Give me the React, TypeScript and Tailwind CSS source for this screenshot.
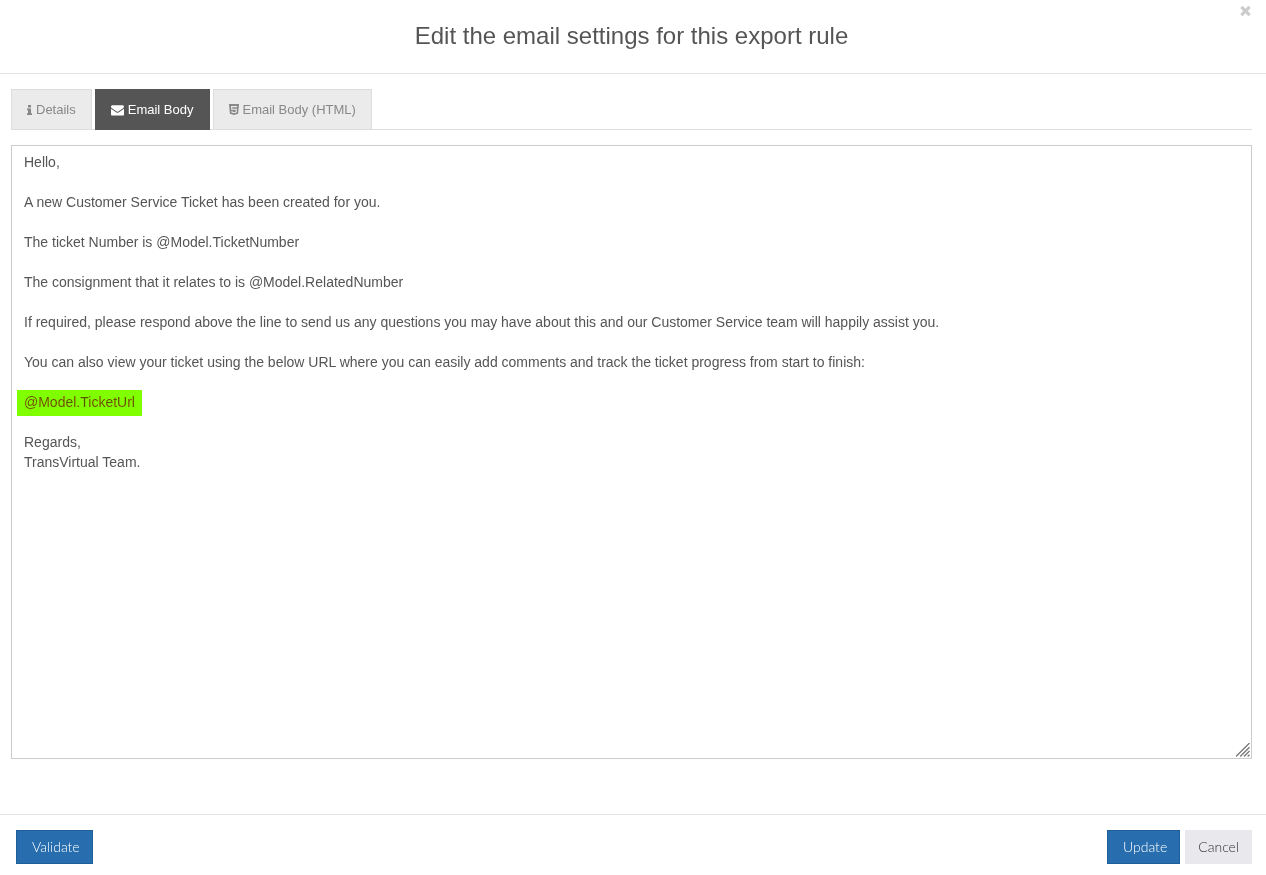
import { useState } from 'react';
import type { ReactNode } from 'react';
import { twMerge } from 'tailwind-merge';

const EMAIL_BODY = `Hello,

A new Customer Service Ticket has been created for you.

The ticket Number is @Model.TicketNumber

The consignment that it relates to is @Model.RelatedNumber

If required, please respond above the line to send us any questions you may have about this and our Customer Service team will happily assist you.

You can also view your ticket using the below URL where you can easily add comments and track the ticket progress from start to finish:

@Model.TicketUrl

Regards,
TransVirtual Team.`;

interface TabProps {
    active?: boolean;
    icon: ReactNode;
    label: string;
}

const InfoIcon = () => (
    <svg viewBox="0 0 5 10" className="h-[10px] w-[5px]" fill="currentColor" aria-hidden="true">
        <path d="M1 0h3v2.4H1zM0 3.4h4v4.8h1V10H0V8.2h1V5.2H0z" />
    </svg>
);

const EnvelopeIcon = () => (
    <svg viewBox="0 0 1792 1792" className="h-[14px] w-[13px]" fill="currentColor" aria-hidden="true">
        <path d="M1792 710v794q0 66-47 113t-113 47h-1472q-66 0-113-47t-47-113v-794q44 49 101 87 362 246 497 345 57 42 92.5 65.5t94.5 48 110 24.5h2q51 0 110-24.5t94.5-48 92.5-65.5q170-123 498-345 57-39 100-87zm0-294q0 79-49 151t-122 123q-376 261-468 325-10 7-42.5 31t-54 38.5-52 32.5-57.5 27-50 9h-2q-23 0-50-9t-57.5-27-52-32.5-54-38.5-42.5-31q-91-64-262-182.5t-205-142.5q-62-42-117-115.5t-55-136.5q0-78 41.5-130t118.5-52h1472q65 0 112.5 47t47.5 113z" />
    </svg>
);

const Html5Icon = () => (
    <svg viewBox="0 0 10 11" className="h-[11px] w-[10px]" aria-hidden="true">
        <path d="M0 0h10L9.1 9.7 5 11 .9 9.7z" fill="currentColor" />
        <path d="M8 2.6H2.6l.2 2.6h4.6l-.3 2.9L5 8.7l-2-.6-.1-1.2" fill="none" stroke="#ebebeb" strokeWidth="1.1" />
    </svg>
);

const CloseIcon = () => (
    <svg viewBox="0 0 1792 1792" className="size-[15px]" fill="currentColor" aria-hidden="true">
        <path d="M1490 1322q0 40-28 68l-136 136q-28 28-68 28t-68-28l-294-294-294 294q-28 28-68 28t-68-28l-136-136q-28-28-28-68t28-68l294-294-294-294q-28-28-28-68t28-68l136-136q28-28 68-28t68 28l294 294 294-294q28-28 68-28t68 28l136 136q28 28 28 68t-28 68l-294 294 294 294q28 28 28 68z" />
    </svg>
);

const Tab = ({ active, icon, label }: TabProps) => (
    <a
        href="#"
        role="tab"
        aria-selected={!!active}
        className={twMerge(
            'flex h-[41px] items-center gap-1 border border-[#ddd] bg-[#ebebeb] px-[15px] text-[13px] text-[#888]',
            active && 'border-[#555] bg-[#555] text-white'
        )}
    >
        {icon}
        <span>{label}</span>
    </a>
);

export default function App() {
    const [body, setBody] = useState(EMAIL_BODY);

    return (
        <div className="flex min-h-screen flex-col bg-white font-['Liberation_Sans',Arial,sans-serif] text-[#555]">
            <header className="relative border-b border-[#e5e5e5] pt-5 pr-[14px] pb-[21px] pl-[11px]">
                <h1 className="text-center text-2xl">Edit the email settings for this export rule</h1>
                <button type="button" aria-label="Close" className="absolute top-[3px] right-[13px] text-[#ccc]">
                    <CloseIcon />
                </button>
            </header>

            <main className="flex flex-1 flex-col pt-[15px] pr-[14px] pb-[55px] pl-[11px]">
                <div className="border-b border-[#ddd]">
                    <div role="tablist" className="-mb-px flex gap-[3px]">
                        <Tab icon={<InfoIcon />} label="Details" />
                        <Tab active icon={<EnvelopeIcon />} label="Email Body" />
                        <Tab icon={<Html5Icon />} label="Email Body (HTML)" />
                    </div>
                </div>

                <div className="relative mt-[15px] flex flex-1">
                    <textarea
                        aria-label="Email Body"
                        value={body}
                        onChange={(e) => setBody(e.target.value)}
                        spellCheck={false}
                        className="w-full flex-1 resize-none border border-[#ccc] bg-white px-3 py-[6px] text-sm leading-5 outline-none"
                    />
                    {/* Highlight over the ticket URL placeholder */}
                    <div className="pointer-events-none absolute top-[245px] left-[6px] h-[26px] w-[125px] bg-[#80ff00] mix-blend-darken" />
                    <svg
                        viewBox="0 0 15 15"
                        className="pointer-events-none absolute right-[2px] bottom-[2px] size-[14px]"
                        fill="none"
                        stroke="#777"
                        strokeWidth="1.4"
                        aria-hidden="true"
                    >
                        <path d="M0 14.5 14.5 0M4.5 14.5 14.5 4.5M8.5 14.5 14.5 8.5M12.5 14.5 14.5 12.5" />
                    </svg>
                </div>
            </main>

            <footer className="flex items-center justify-between border-t border-[#e5e5e5] pt-[15px] pr-[14px] pb-[11px] pl-4 font-['Lato',sans-serif] text-sm">
                <button type="button" className="h-[34px] border border-[#1f5f99] bg-[#286eae] pr-3 pl-[15px] font-light text-white">
                    Validate
                </button>
                <div className="flex gap-[5px]">
                    <button type="button" className="h-[34px] border border-[#1f5f99] bg-[#286eae] pr-3 pl-[15px] font-light text-white">
                        Update
                    </button>
                    <button type="button" className="h-[34px] border border-[#e8e8ed] bg-[#e8e8ed] px-3 font-light text-[#333]">
                        Cancel
                    </button>
                </div>
            </footer>
        </div>
    );
}
